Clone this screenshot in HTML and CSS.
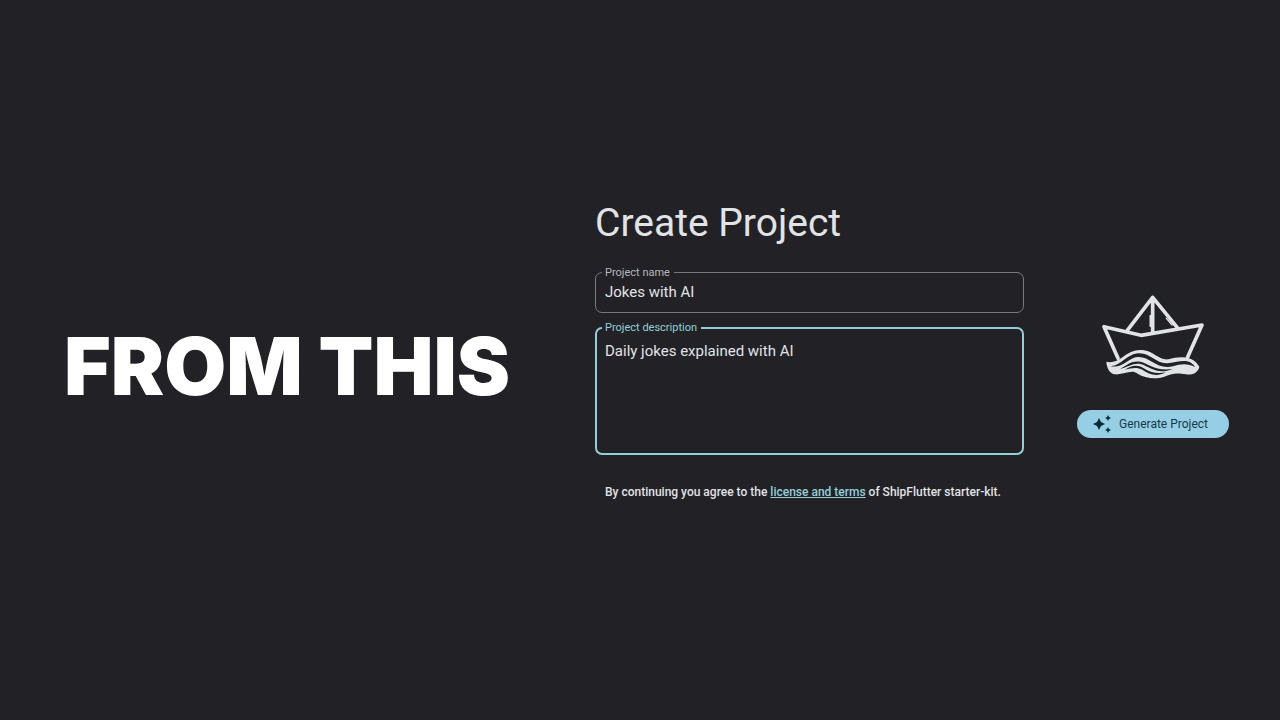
FILE: index.html
```
<!DOCTYPE html>
<html lang="en">

<head>
  <meta charset="UTF-8">
  <meta name="viewport" content="width=device-width, initial-scale=1.0">
  <title>Create Project</title>
  <link rel="stylesheet" href="styles.css">
</head>

<body>
  <main>
    <h1>FROM THIS</h1>

    <form id="project">
      <h2>Create Project</h2>

      <fieldset>
        <legend><label for="name">Project name</label></legend>
        <input name="name" id="name" value="Jokes with AI" autocomplete="off">
      </fieldset>

      <fieldset class="active">
        <legend><label for="description">Project description</label></legend>
        <textarea name="description" id="description">Daily jokes explained with AI</textarea>
      </fieldset>

      <p>By continuing you agree to the <a href="#terms">license and terms</a> of ShipFlutter starter-kit.</p>
    </form>

    <aside>
      <svg class="boat" viewBox="33 25 312 258" aria-hidden="true">
        <g fill="none" stroke="currentColor" stroke-width="11" stroke-linecap="round" stroke-linejoin="round">
          <path d="M84 218 42 123 153 149 336 118 292 216" />
          <path d="M112 134 188 35 262 126M188 35V141" />
          <path d="M181 90V122" stroke-width="5" />
          <path d="M229 98 246 118M237 98 249 112" stroke-width="4" />
        </g>
        <path fill="currentColor" d="M49 228C65 232 80 227 94 217C119 199 137 190 162 194C193 199 207 224 235 221C256 216 279 211 303 220C315 225 322 234 328 243C325 259 308 270 288 266C258 260 242 264 223 273C195 282 164 277 143 264C123 250 103 268 75 266C59 264 50 247 49 228Z" />
        <g class="swell">
          <path d="M61 241C90 244 108 206 144 203C183 201 197 235 232 233C254 231 287 219 304 232Q312 237 315 245C292 231 270 236 249 242C197 253 182 211 142 214C117 216 94 251 61 241Z" />
          <path d="M91 250C112 236 127 224 151 228C178 234 193 257 248 250C204 269 179 244 154 236C132 230 115 244 91 250Z" />
          <path d="M105 252C124 240 142 236 160 247C181 260 200 266 227 260C199 275 177 266 157 252C141 243 124 247 105 252Z" />
        </g>
      </svg>
      <button type="submit" form="project">
        <svg class="sparkles" viewBox="0 0 18 18" aria-hidden="true">
          <path fill="currentColor" d="M6 3 8 7 12 9 8 11 6 15 4 11 0 9 4 7ZM15 0 16 2 18 3 16 4 15 6 14 4 12 3 14 2ZM15 12 16 14 18 15 16 16 15 18 14 16 12 15 14 14Z" />
        </svg>
        Generate Project
      </button>
    </aside>
  </main>
</body>

</html>
```
FILE: styles.css
```
* {
  box-sizing: border-box;
}

body {
  margin: 0;
  background: #222226;
  color: #e1e3e5;
  font-family: Roboto, sans-serif;
}

main {
  min-block-size: 100vh;
  padding: 12px 51px 0 64px;
  display: grid;
  grid-template-columns: 531fr 429fr 205fr;
  align-items: center;
}

h1 {
  margin: 0;
  color: #fff;
  font-family: Inter, sans-serif;
  font-size: 80px;
  font-weight: 900;
  line-height: 96px;
}

h2 {
  margin: 0 0 18px;
  font-size: 39px;
  font-weight: 400;
  line-height: 48px;
}

form {
  padding-block-end: 34px;
}

fieldset {
  min-inline-size: 0;
  margin: 0;
  padding: 0 9px;
  border: 1px solid #77797c;
  border-radius: 7px;
}

fieldset + fieldset {
  margin-block-start: 7px;
}

.active {
  padding: 0 8px;
  border: 2px solid #93cfd8;
}

legend {
  margin-inline-start: -3px;
  padding: 0 4px 0 3px;
  color: #b4b7ba;
  font-size: 11px;
  line-height: 16px;
}

.active legend {
  color: #93cfd8;
}

input,
textarea {
  display: block;
  inline-size: 100%;
  padding: 0;
  border: 0;
  outline: 0;
  background: none;
  color: inherit;
  font-family: inherit;
  font-size: 15px;
  line-height: 20px;
}

input {
  block-size: 31px;
  padding-block-end: 9px;
}

textarea {
  block-size: 117px;
  padding-block-start: 5px;
  resize: none;
}

p {
  margin: 29px 10px 0;
  font-size: 12px;
  font-weight: 500;
  line-height: 16px;
}

a {
  color: #93cfd8;
}

aside {
  display: flex;
  flex-direction: column;
  align-items: center;
  justify-self: end;
  gap: 30px;
}

.boat {
  inline-size: 104px;
  block-size: 86px;
}

.swell {
  fill: #222226;
}

button {
  display: flex;
  align-items: center;
  gap: 8px;
  padding: 6px 21px 6px 16px;
  border: 0;
  border-radius: 14px;
  background: #96cfe5;
  color: #153a47;
  font-family: inherit;
  font-size: 12px;
  line-height: 16px;
}

.sparkles {
  inline-size: 18px;
  block-size: 18px;
  margin-block: -1px;
  color: #062b36;
}
```
